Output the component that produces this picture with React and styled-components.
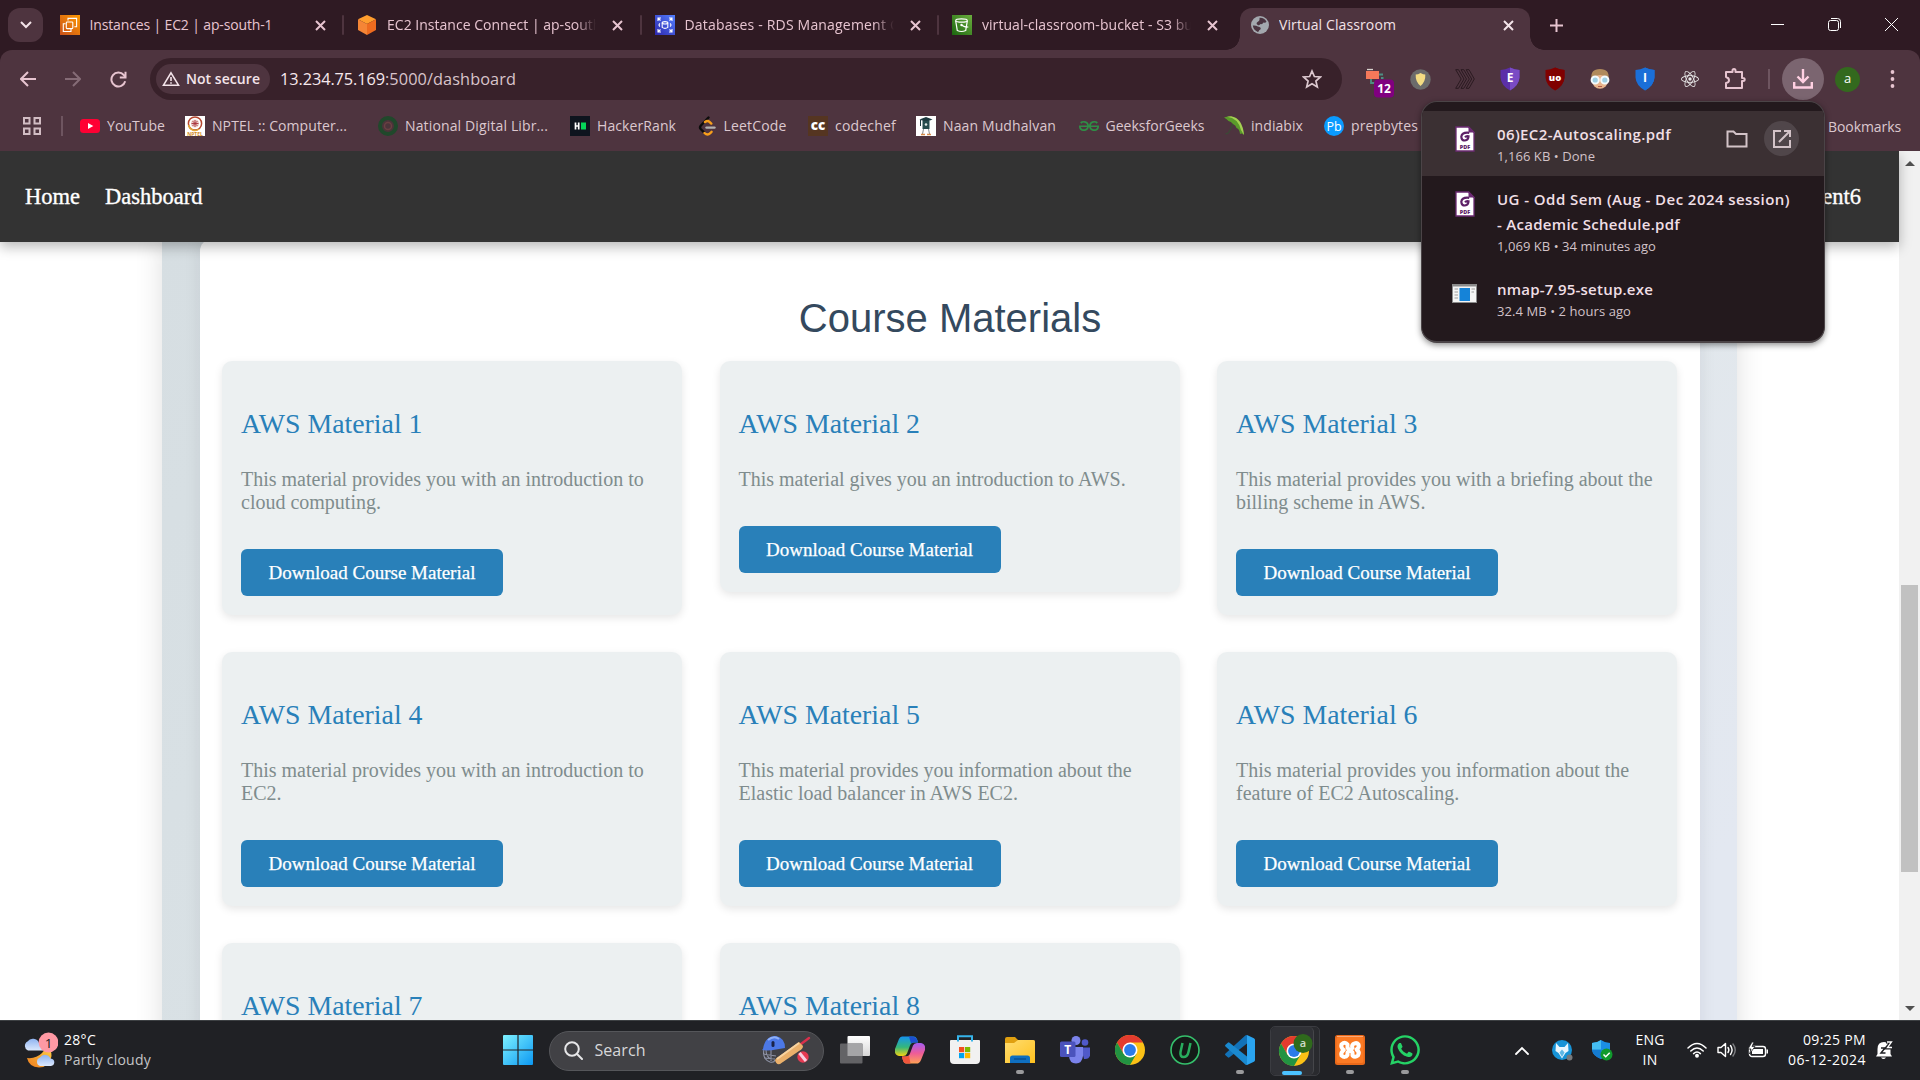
import React, { useLayoutEffect, useRef, useState } from "react";
import styled, { createGlobalStyle } from "styled-components";
import { SiGeeksforgeeks, SiReact } from "react-icons/si";
import { FaWhatsapp } from "react-icons/fa";

const UI = `"Open Sans", "Noto Sans", sans-serif`;
const SERIF = `"Liberation Serif", "Times New Roman", serif`;

const Global = createGlobalStyle`
  * { box-sizing: border-box; }
  html, body { margin: 0; padding: 0; overflow: hidden; background: #fff; }
  svg { display: block; flex: none; }
`;

/* ---------- text with a set measure ---------- */
const Line = styled.span`
  display: inline-block;
  white-space: pre;
  color: ${(p) => p.$color || "inherit"};
  font-size: ${(p) => p.$size}px;
  font-weight: ${(p) => p.$weight || 400};
  line-height: 1.3;
`;

function Fit({ w, size = 14, color, weight, children }) {
  const ref = useRef(null);
  const [ls, setLs] = useState(0);
  useLayoutEffect(() => {
    const el = ref.current;
    el.style.letterSpacing = "0px";
    const natural = el.getBoundingClientRect().width;
    const n = el.textContent.length;
    setLs((w - natural) / n);
    el.style.letterSpacing = (w - natural) / n + "px";
  }, [w]);
  return (
    <Line ref={ref} $size={size} $color={color} $weight={weight} style={{ letterSpacing: ls + "px" }}>
      {children}
    </Line>
  );
}

/* ---------- browser frame ---------- */
const Screen = styled.div`
  width: 1920px;
  height: 1080px;
  display: flex;
  flex-direction: column;
  position: relative;
  overflow: hidden;
  font-family: ${UI};
`;
const TabStrip = styled.div`
  height: 50px;
  flex: none;
  display: flex;
  background: #2f1a23;
  padding-left: 8px;
`;
const TabSearch = styled.div`
  width: 35px;
  height: 34px;
  margin: 8px 3.5px 0 0;
  border-radius: 12px;
  background: #4e343f;
  display: grid;
  place-items: center;
`;
const Tab = styled.div`
  width: 297.5px;
  height: 50px;
  padding-left: 13px;
  display: flex;
  align-items: center;
  color: #e7c4d0;
`;
const TabTitle = styled.div`
  width: 209px;
  margin-left: 10px;
  overflow: hidden;
  display: flex;
  ${(p) => p.$fade && "mask-image: linear-gradient(90deg, #000 calc(100% - 20px), transparent);"}
`;
const TabClose = styled.div`
  width: 43px;
  display: grid;
  place-items: center;
`;
const TabRule = styled.div`
  width: 2px;
  height: 20px;
  margin-left: auto;
  border-radius: 1px;
  background: ${(p) => (p.$off ? "transparent" : "#4e343f")};
`;
const ActiveTab = styled.div`
  width: 290px;
  height: 42px;
  margin: 8px 0 0 3.5px;
  padding: 0 0 8px 11px;
  display: flex;
  align-items: center;
  background: #4e343f;
  border-radius: 12px 12px 0 0;
  color: #f3e3e8;
  position: relative;
  &::before, &::after {
    content: "";
    position: absolute;
    bottom: 0;
    width: 14px;
    height: 14px;
  }
  &::before { left: -14px; background: radial-gradient(circle at 0 0, transparent 13.5px, #4e343f 14px); }
  &::after { right: -14px; background: radial-gradient(circle at 100% 0, transparent 13.5px, #4e343f 14px); }
`;
const NewTab = styled.div`
  width: 52px;
  height: 50px;
  display: grid;
  place-items: center;
`;
const WindowButtons = styled.div`
  margin-left: auto;
  display: grid;
  grid-template-columns: 57px 57px 57px;
  height: 49px;
  place-items: center;
`;

const ToolbarBack = styled.div`
  background: #2f1a23;
  flex: none;
`;
const Toolbar = styled.div`
  height: 51px;
  display: flex;
  align-items: center;
  background: #4e343f;
  padding: 7px 0 0 5.5px;
  border-radius: 12px 12px 0 0;
`;
const Cell = styled.div`
  width: ${(p) => p.$w || 45}px;
  height: 42px;
  flex: none;
  display: grid;
  place-items: center;
`;
const Omnibox = styled.div`
  width: 1192px;
  height: 42px;
  margin: 0 10.5px 0 9.5px;
  padding: 0 20px 0 6px;
  border-radius: 21px;
  background: #38212a;
  display: flex;
  align-items: center;
  color: #d9c4cb;
`;
const Chip = styled.div`
  width: 114px;
  height: 30px;
  margin-right: 10px;
  padding-left: 6px;
  gap: 6px;
  border-radius: 15px;
  background: #4e343f;
  color: #f4e4ea;
  display: flex;
  align-items: center;
`;
const Address = styled.div`
  display: flex;
  padding-top: 2px;
`;
const Push = styled.div`
  margin-left: auto;
  margin-right: ${(p) => p.$right || 0}px;
`;
const DownloadsButton = styled.div`
  width: 42px;
  height: 42px;
  border-radius: 50%;
  background: #7b6570;
  display: grid;
  place-items: center;
`;
const Avatar = styled.div`
  width: 25px;
  height: 25px;
  border-radius: 50%;
  background: #33691e;
  color: #fff;
  font-size: 13px;
  line-height: 22px;
  text-align: center;
`;
const Divider = styled.div`
  width: 2px;
  height: 20px;
  background: #6e5560;
`;
const BookmarkBar = styled.div`
  height: 50px;
  flex: none;
  display: flex;
  align-items: center;
  background: #4e343f;
  color: #dcc8cf;
  padding-left: 22px;
`;
const BookmarkGrid = styled.div`
  display: grid;
  grid-template-columns: 105px 193px 192px 126.500px 111.500px 108px 162.500px 145.500px 100px 110px;
  margin-left: 6px;
`;
const Bookmark = styled.div`
  display: flex;
  align-items: center;
  gap: 7px;
`;

/* ---------- web page ---------- */
const Viewport = styled.div`
  height: 869px;
  flex: none;
  display: flex;
  background: #fff;
  overflow: hidden;
`;
const Page = styled.div`
  width: 1899px;
  display: flex;
  flex-direction: column;
  font-family: ${SERIF};
`;
const Nav = styled.nav`
  height: 91px;
  flex: none;
  display: flex;
  align-items: center;
  padding: 0 38px 0 25px;
  gap: 25px;
  background: #333;
  color: #fff;
  font-size: 22.5px;
  -webkit-text-stroke: 0.35px #fff;
  z-index: 2;
  box-shadow: 0 5px 12px rgba(0, 0, 0, 0.28);
`;
const NavUser = styled.span`
  margin-left: auto;
`;
const Band = styled.main`
  width: 1575px;
  height: 1100px;
  margin: -3px 0 0 162px;
  padding: 0 37px 0 38px;
  background: linear-gradient(125deg, #d6dee2 0%, #dae2e6 35%, #e1e7ea 62%, #e3e8f1 85%);
  box-shadow: 0 0 26px rgba(0, 0, 0, 0.13);
`;
const Sheet = styled.section`
  height: 1100px;
  padding: 56px 22px 0;
  border-radius: 12px;
  background: #fff;
  box-shadow: 0 0 18px rgba(0, 0, 40, 0.08);
`;
const Heading = styled.h2`
  margin: 0 0 20px;
  font: 400 40px/46px "Liberation Sans", Arial, sans-serif;
  color: #34495e;
  text-align: center;
`;
const CardGrid = styled.div`
  display: grid;
  grid-template-columns: repeat(3, 460px);
  gap: 37px 37.5px;
  align-items: start;
`;
const Card = styled.article`
  padding: 47px 19px 19px;
  border-radius: 10px;
  background: #ecf0f1;
  box-shadow: 0 3px 8px rgba(0, 0, 0, 0.1);
`;
const CardTitle = styled.h3`
  margin: 0 0 28px;
  font-weight: 400;
  font-size: 27.8px;
  line-height: 32px;
  color: #2980b9;
`;
const CardText = styled.p`
  margin: 0 0 35px;
  font-size: 20px;
  line-height: 23px;
  color: #7f8c8d;
`;
const CardButton = styled.button`
  display: block;
  width: 262px;
  height: 47px;
  padding: 0;
  border: 0;
  border-radius: 6px;
  background: #2980b9;
  color: #fff;
  font: 400 19px/22px ${SERIF};
  -webkit-text-stroke: 0.25px #fff;
`;
const ScrollBar = styled.div`
  width: 21px;
  background: #f1f1f1;
  display: flex;
  flex-direction: column;
  align-items: center;
  justify-content: space-between;
  padding: 9px 0 8px;
`;
const Thumb = styled.div`
  width: 17px;
  height: 287px;
  margin-top: 284px;
  background: #c1c1c1;
`;

/* ---------- downloads popup ---------- */
const Popup = styled.div`
  position: absolute;
  left: 1421px;
  top: 101px;
  width: 404px;
  height: 242px;
  padding-top: 9px;
  border: 1px solid #4b4447;
  border-bottom-width: 2px;
  border-radius: 16px;
  background: #23191d;
  box-shadow: 0 2px 6px rgba(0, 0, 0, 0.45);
  z-index: 5;
  overflow: hidden;
`;
const DownloadRow = styled.div`
  height: ${(p) => p.$h}px;
  display: flex;
  align-items: flex-start;
  padding: 11px 25px 0 0;
  background: ${(p) => (p.$hover ? "#3b3033" : "transparent")};
`;
const FileIcon = styled.div`
  width: 75px;
  padding: ${(p) => p.$top}px 0 0 ${(p) => p.$left || 33}px;
`;
const FileText = styled.div`
  display: flex;
  flex-direction: column;
  align-items: flex-start;
  color: #f0dfe5;
  & > span { height: 25px; line-height: 25px; }
  & > span:last-child { height: 18px; line-height: 18px; color: #d2c2c8; }
`;
const RowActions = styled.div`
  margin-left: auto;
  margin-top: -1px;
  display: flex;
  align-items: center;
  gap: 16px;
  color: #d3c3c8;
`;
const OpenButton = styled.div`
  width: 35px;
  height: 35px;
  border-radius: 50%;
  background: #50464a;
  display: grid;
  place-items: center;
`;

/* ---------- taskbar ---------- */
const Taskbar = styled.footer`
  height: 60px;
  flex: none;
  display: flex;
  align-items: center;
  background: #202125;
  border-top: 1px solid #3d4043;
  color: #fff;
`;
const Weather = styled.div`
  width: 490px;
  padding: 0 0 2px 23px;
  display: flex;
  align-items: center;
  gap: 6px;
`;
const Stack = styled.div`
  display: flex;
  flex-direction: column;
  align-items: ${(p) => p.$align || "flex-start"};
  & > span { height: 20px; line-height: 20px; }
`;
const TaskCell = styled.div`
  width: 55px;
  height: 59px;
  display: flex;
  flex-direction: column;
  align-items: center;
  padding-top: 14px;
  gap: 5px;
`;
const ActiveCell = styled.div`
  width: 50px;
  height: 50px;
  margin: 0 2.5px;
  display: flex;
  border-radius: 5px;
  background: #292a2e;
  border: 1px solid #3b3c41;
`;
const ActiveFace = styled.div`
  width: 43px;
  padding: 7px 0 0;
  display: flex;
  flex-direction: column;
  align-items: center;
  gap: 5px;
  border-radius: 5px;
  background: #303136;
  border-right: 1px solid #45464a;
`;
const Dot = styled.div`
  width: ${(p) => (p.$active ? 20 : 8)}px;
  height: 4px;
  border-radius: 2px;
  background: ${(p) => (p.$active ? "#4cc2ff" : "#9a9a9c")};
`;
const SearchBox = styled.div`
  width: 275px;
  height: 40px;
  margin: 0 3.5px;
  padding: 0 12px 0 14px;
  border: 1px solid #55565a;
  border-radius: 20px;
  background: #414145;
  display: flex;
  align-items: center;
  gap: 12px;
  color: #d7d7d9;
`;
const Tray = styled.div`
  margin-left: auto;
  display: flex;
  align-items: center;
  padding: 0 18px 1px 0;
`;
const TrayCell = styled.div`
  width: ${(p) => p.$w}px;
  display: grid;
  place-items: ${(p) => p.$place || "center"};
`;

/* ---------- icons ---------- */
const Cross = ({ s = 11, w = 2 }) => (
  <svg width={s} height={s} viewBox="0 0 11 11" stroke="currentColor" strokeWidth={w} fill="none"><path d="M1 1l9 9M10 1l-9 9" /></svg>
);
const Ec2Icon = () => (
  <svg width="20" height="20" viewBox="0 0 20 20">
    <defs><linearGradient id="ec2" x1="0" y1="1" x2="1" y2="0"><stop stopColor="#c8511b" /><stop offset="1" stopColor="#ff9900" /></linearGradient></defs>
    <rect width="20" height="20" fill="url(#ec2)" />
    <g fill="none" stroke="#fff" strokeWidth="1.1"><path d="M5.5 8.7H3.3v7.8H11v-2.6" /><rect x="6.3" y="7" width="6.5" height="6.6" rx=".8" /><path d="M8 5.6V3.4h8.6v8.4h-2.2" /></g>
  </svg>
);
const CubeIcon = () => (
  <svg width="20" height="20" viewBox="0 0 20 20"><path d="M10 0l9 4.2L10 9 1 4.2z" fill="#ff9d2e" /><path d="M1 4.2L10 9v11l-9-5z" fill="#f58536" /><path d="M19 4.2L10 9v11l9-5z" fill="#ee6b1f" /></svg>
);
const RdsIcon = () => (
  <svg width="20" height="20" viewBox="0 0 20 20">
    <defs><linearGradient id="rds" x1="0" y1="1" x2="1" y2="0"><stop stopColor="#2e27ad" /><stop offset="1" stopColor="#527fff" /></linearGradient></defs>
    <rect width="20" height="20" fill="url(#rds)" />
    <g fill="none" stroke="#fff" strokeWidth="1.1"><path d="M3 6V3h3M3 3l2.5 2.5M14 3h3v3M17 3l-2.5 2.5M3 14v3h3M3 17l2.5-2.5M17 14v3h-3M17 17l-2.500-2.500M5 8.500q-2 1.500 0 3M15 8.500q2 1.500 0 3" /><ellipse cx="10" cy="7.800" rx="2.800" ry="1.200" /><path d="M7.200 7.800v4.600q2.800 2 5.600 0V7.800" /></g>
  </svg>
);
const S3Icon = () => (
  <svg width="20" height="20" viewBox="0 0 20 20">
    <defs><linearGradient id="s3" x1="0" y1="1" x2="1" y2="0"><stop stopColor="#1b660f" /><stop offset="1" stopColor="#6cae3e" /></linearGradient></defs>
    <rect width="20" height="20" fill="url(#s3)" />
    <g fill="none" stroke="#fff" strokeWidth="1.200"><ellipse cx="9.500" cy="5.500" rx="5.800" ry="1.700" /><path d="M3.700 5.800l1.600 9.700q4.200 2 8.400 0l1.600-9.700M9.300 10q5 3 7 1.800" /><circle cx="9.500" cy="10" r=".6" /></g>
  </svg>
);
const GlobeIcon = () => (
  <svg width="18" height="18" viewBox="0 0 18 18"><circle cx="9" cy="9" r="9" fill="#a3a8ae" /><path d="M8.500 1.800q5-.3 7 4-1 1.200-3 .7-1 2-3 1.600-1 1.600-2.700.8Q4.500 7.500 6.500 6 9 5 8.500 1.800zM1.800 9.500q3-.4 5 1 2 .2 3 1.500 0 2-1.600 2.200-.4 1.500-1.400 1.800Q2.500 14 1.800 9.500z" fill="#4a3440" /></svg>
);
const NptelIcon = () => (
  <svg width="20" height="20" viewBox="0 0 20 20"><rect width="20" height="20" fill="#fff" /><circle cx="10" cy="7.500" r="6.600" fill="none" stroke="#b5462f" strokeWidth="1.500" /><path d="M3.500 9A6.600 6.600 0 0 0 14 13" fill="none" stroke="#e0a43a" strokeWidth="1.500" /><circle cx="10" cy="7.500" r="4" fill="#edd0cb" /><path d="M10 4v7M6.500 7.500h7M7.500 5l5 5M12.500 5l-5 5" stroke="#a8323c" strokeWidth=".9" /><text x="10" y="19.500" textAnchor="middle" fontSize="5" fontWeight="700" fill="#d08a1e" fontFamily="Open Sans">NPTEL</text></svg>
);
const NdlIcon = () => (
  <svg width="20" height="20" viewBox="0 0 20 20"><circle cx="10" cy="10" r="8" fill="#4b343a" stroke="#20482b" strokeWidth="4" /><circle cx="10" cy="10" r="3.500" fill="none" stroke="#6a3f42" strokeWidth="1.500" /></svg>
);
const HackerIcon = () => (
  <svg width="20" height="20" viewBox="0 0 20 20"><rect width="20" height="20" fill="#0e141e" /><path d="M5.500 6.500v7M8.700 6.500v7M5.500 10h3.200" stroke="#fff" strokeWidth="1.700" /><rect x="11" y="6.500" width="5" height="7" fill="#05d559" /></svg>
);
const ChefIcon = () => (
  <svg width="20" height="20" viewBox="0 0 20 20"><rect width="20" height="20" fill="#553521" /><text x="10" y="14" textAnchor="middle" fontSize="13.500" fontWeight="800" fill="#fff" fontFamily="Open Sans">cc</text></svg>
);
const NaanIcon = () => (
  <svg width="20" height="20" viewBox="0 0 20 20"><rect width="20" height="20" fill="#fff" /><path d="M3.500 3.500L10 1l6.500 2.500L10 6z" fill="#1d3b40" /><path d="M6.500 5h7v8h-7z" fill="#254b4c" /><path d="M4.500 4v6" stroke="#1d3b40" /><circle cx="10" cy="8.500" r="1.300" fill="#dfe8e6" /><path d="M7.500 13l-1 5M12.500 13l1 5" stroke="#8a8d8f" /><path d="M5 18.500h4M11 18.500h4" stroke="#d88b4a" strokeWidth="1.500" /></svg>
);
const UmbrellaIcon = () => (
  <svg width="20" height="20" viewBox="0 0 20 20"><path d="M9.500 7L5 16q-1.500 2.500-3.500 1.500" fill="none" stroke="#3b4a36" strokeWidth="1.300" /><path d="M0 1.500Q15-4 20 19q-2-2.500-4-1-.3-5-3.500-6-.5-2.500-3.500-4-2-2.500-4.500-3Q3 3 0 1.500z" fill="#5a9a2a" /><path d="M3 .800Q14 2 17 14L20 19Q18.500 2 7 .2z" fill="#a4d152" /></svg>
);
const PbIcon = () => (
  <svg width="20" height="20" viewBox="0 0 20 20"><circle cx="10" cy="10" r="10" fill="#0a9bff" /><text x="10" y="14.500" textAnchor="middle" fontSize="12.500" fill="#fff" fontFamily="Open Sans">Pb</text></svg>
);
const YouTubeIcon = () => (
  <svg width="20" height="20" viewBox="0 0 20 20"><rect y="3" width="20" height="14" rx="3.500" fill="#ff0033" /><path d="M8 7l5.300 3L8 13z" fill="#fff" /></svg>
);
const GfgMark = () => <SiGeeksforgeeks size={20} color="#2f8d46" />;
const LeetMark = () => (
  <svg width="20" height="20" viewBox="0 0 20 20" fill="none" strokeWidth="2.400" strokeLinecap="round"><path d="M11.500 1.500L3.700 9.700q-1.400 1.700 0 3.300L7 16.300" stroke="#0c0c0c" /><path d="M7.500 17q3 3 5.800.2L14.600 15.800M8 6q2.500-2 4.500-.2L14.300 7.600" stroke="#f89f1b" /><path d="M9.500 11.600h8" stroke="#b3b1b0" /></svg>
);
const PdfIcon = () => (
  <svg width="20" height="26" viewBox="0 0 20 26"><path d="M1 1h12.500L19 6.500V25H1z" fill="#fff" stroke="#6b2a72" strokeWidth="1.300" /><path d="M13.500 0L20 6.500h-6.500z" fill="#6b2a72" /><path d="M14.200 6.800Q7 6 6.300 10.600q.2 3.900 3.600 3.900 3.600-.4 3.600-4.200-2.500-.4-3.400 1" fill="none" stroke="#5d2166" strokeWidth="2.200" /><text x="10" y="22.800" textAnchor="middle" fontSize="5.500" fontWeight="800" fill="#5d2166" fontFamily="Open Sans">PDF</text></svg>
);
const ExeIcon = () => (
  <svg width="25" height="19" viewBox="0 0 25 19"><rect width="25" height="19" fill="#8b8b8b" /><rect x="1" y="2.500" width="23" height="15.500" fill="#f5f5f5" /><rect x="7.500" y="4" width="10.500" height="13" fill="#1583d8" /><path d="M2.500 5h3.500M2.500 8h3.500M2.500 11h3.500M2.500 14h3.500M19.500 5h3.500M19.500 8h2.500" stroke="#9d9d9d" /></svg>
);
const ChromeParts = () => (
  <>
    <circle cx="15" cy="15" r="15" fill="#fbc116" />
    <path d="M15 7.500h13A15 15 0 0 0 2 7.500l6.500 11.200z" fill="#e33b2e" />
    <path d="M2 7.500A15 15 0 0 0 15 30l6.500-11.300-13 0z" fill="#229342" />
    <circle cx="15" cy="15" r="7.500" fill="#fff" />
    <circle cx="15" cy="15" r="5.900" fill="#2a7bea" />
  </>
);
const ChromeIcon = () => (
  <svg width="30" height="30" viewBox="0 0 30 30"><ChromeParts /></svg>
);
const ChromeBadged = () => (
  <svg width="42" height="32" viewBox="0 0 42 32">
    <g transform="translate(8 2)"><ChromeParts /></g>
    <circle cx="34" cy="5.500" r="0" />
    <circle cx="32" cy="9.500" r="9.500" fill="#2f6a1c" />
    <text x="32" y="13" textAnchor="middle" fontSize="11" fontWeight="600" fill="#cfdcc8" fontFamily="Open Sans">a</text>
  </svg>
);
const WeatherIcon = () => (
  <svg width="35" height="36" viewBox="0 0 35 36">
    <defs><linearGradient id="moon" x1="1" y1="0" x2="0" y2="1"><stop stopColor="#ffcf45" /><stop offset="1" stopColor="#ee7b1d" /></linearGradient><linearGradient id="cl" x1="0" y1="0" x2="0" y2="1"><stop stopColor="#8fb3f0" /><stop offset="1" stopColor="#dbe8fd" /></linearGradient></defs>
    <path d="M4 26q9 1 15-5 2-2 3-5 7 1 6.500 8Q27 35 16 35.500 6 35 4 26z" fill="url(#moon)" />
    <path d="M5 18.500a5 5 0 0 1-.5-9A6.500 6.500 0 0 1 16 11q5 1 4 7.500z" fill="url(#cl)" />
    <path d="M17 34a4.500 4.500 0 0 1 0-8.500 6 6 0 0 1 10.500 1q4 .5 3.800 4-.3 3-3.300 3.500z" fill="url(#cl)" />
    <circle cx="25.500" cy="10.500" r="9.900" fill="#ff99a4" /><text x="25.500" y="15.500" textAnchor="middle" fontSize="13.500" fill="#1b1b1b" fontFamily="Open Sans">1</text>
  </svg>
);
const StartIcon = () => (
  <svg width="30" height="30" viewBox="0 0 30 30"><defs><linearGradient id="st" x1="0" y1="0" x2="1" y2="1"><stop stopColor="#7df1ff" /><stop offset="1" stopColor="#0c98f2" /></linearGradient></defs><path d="M0 1q0-1 1-1h13.400v14.400H0zM15.600 0H29q1 0 1 1v13.400H15.600zM0 15.600h14.400V30H1q-1 0-1-1zM15.600 15.600H30V29q0 1-1 1H15.600z" fill="url(#st)" /></svg>
);
const CricketIcon = () => (
  <svg width="50" height="32" viewBox="0 0 50 32">
    <path d="M3 14Q1 24 9 27q4 1 5-2M5 15q0 7 5 9M2 19l13 2M3 23l11 1M10 15v11" fill="none" stroke="#8e93a6" strokeWidth="1.100" />
    <path d="M2 14Q4 1 15 1q9 2 9 12l-9 1.500Q8 16 1 15z" fill="#4c78e6" /><path d="M7 5q6-5 11-1" fill="none" stroke="#8fb0f7" strokeWidth="2" /><rect x="10.500" y="6" width="3" height="6" rx="1.500" fill="#1a2348" />
    <path d="M40 9l8-6" stroke="#d8304c" strokeWidth="2.400" strokeLinecap="round" /><path d="M38 7l4 4q0 3-4 5L19 29q-4 1-5-4 1-2 3-3z" fill="#eab06b" /><path d="M38 8L16 24" stroke="#f8d3a0" strokeWidth="2" />
    <circle cx="42" cy="22" r="5.700" fill="#e63a52" /><path d="M38.500 18l6.500 8" stroke="#f8cfe0" strokeWidth="3" />
  </svg>
);
const TaskViewIcon = () => (
  <svg width="30" height="30" viewBox="0 0 30 30"><defs><linearGradient id="tv" x1="0" y1="0" x2="0" y2="1"><stop stopColor="#fff" /><stop offset="1" stopColor="#d6d6d6" /></linearGradient></defs><rect x="7.500" y="1" width="22.500" height="20" rx="1" fill="url(#tv)" /><rect x="0" y="8.500" width="22.500" height="20" rx="1" fill="#636366" /><rect x="7.500" y="8.500" width="15" height="12.500" fill="#a5a5a7" /></svg>
);
const CopilotIcon = () => (
  <svg width="30" height="30" viewBox="0 0 30 30"><defs><linearGradient id="cp1" x1="0" y1="0" x2="0" y2="1"><stop stopColor="#1594f0" /><stop offset=".55" stopColor="#35b77a" /><stop offset="1" stopColor="#f3d311" /></linearGradient><linearGradient id="cp2" x1="0" y1="0" x2="0" y2="1"><stop stopColor="#a45cf3" /><stop offset=".5" stopColor="#ee5c98" /><stop offset="1" stopColor="#ffa155" /></linearGradient></defs>
    <path d="M7 1.500h12q3 .5 4 6h-4q-3 0-4 3l-3 8q-1 2.500-4 2.500H4q-5-1-4-7L4 4q1-2.500 3-2.500z" fill="url(#cp1)" /><path d="M17 1.500q5 .2 6 6h-4q-2 0-3 1l-2-7z" fill="#1c4fd0" /><path d="M23 28.500H11q-3-.5-4-7h4q3 0 4-3l3-8q1-2.500 4-2.500h4q5 1 4 7l-4 10q-1 3-3 3.500z" fill="url(#cp2)" /><path d="M11 28.500q-3-.5-4-7h4q2 0 3-1l1.500 8z" fill="#f0553c" /></svg>
);
const StoreIcon = () => (
  <svg width="30" height="30" viewBox="0 0 30 30"><path d="M8 7V1.300h14V7" fill="none" stroke="#36b4ea" strokeWidth="2" /><path d="M1 5h28q1 0 1 1v19q0 4-4 4H4q-4 0-4-4V6q0-1 1-1z" fill="#f1f1f1" /><path d="M8 4v2.500M22 4v2.500" stroke="#36b4ea" strokeWidth="2" /><rect x="9" y="12" width="5.200" height="5.200" fill="#f25022" /><rect x="15" y="12" width="5.200" height="5.200" fill="#7fba00" /><rect x="9" y="18" width="5.200" height="5.200" fill="#00a4ef" /><rect x="15" y="18" width="5.200" height="5.200" fill="#ffb900" /></svg>
);
const ExplorerIcon = () => (
  <svg width="30" height="30" viewBox="0 0 30 30"><defs><linearGradient id="fo" x1="0" y1="0" x2="1" y2="1"><stop stopColor="#ffdd71" /><stop offset="1" stopColor="#ffc11e" /></linearGradient></defs><path d="M0 4q0-2 2-2h8l3 3h15q2 0 2 2v4H0z" fill="#e0a010" /><path d="M0 8h9l4-3h15q2 0 2 2v21H0z" fill="url(#fo)" /><path d="M5 28v-5q0-2.500 2.500-2.500h15Q25 20.500 25 23v5z" fill="#0f6fc0" /><path d="M9 24h12" stroke="#0a4f92" strokeWidth="1.400" /></svg>
);
const TeamsIcon = () => (
  <svg width="30" height="30" viewBox="0 0 30 30"><circle cx="25" cy="7.500" r="3.300" fill="#5059c9" /><path d="M21 12.500h9v8q-1 4-6 3.500z" fill="#5059c9" /><circle cx="16" cy="5.500" r="4.500" fill="#7b83eb" /><path d="M9 12h14v9q-1 7.500-7 7.500-6.500 0-7-7.500z" fill="#7b83eb" /><rect x="0" y="6.500" width="15.500" height="15.500" rx="1.500" fill="#4b53bc" /><text x="7.700" y="18.500" textAnchor="middle" fontSize="12" fontWeight="700" fill="#fff" fontFamily="Open Sans">T</text></svg>
);
const UIcon = () => (
  <svg width="30" height="30" viewBox="0 0 30 30"><circle cx="15" cy="15" r="14" fill="#141a17" stroke="#35c06c" strokeWidth="1.600" /><path d="M12.500 8L10.500 17q-.7 5 3 5 4 0 5-5l2-9" fill="none" stroke="#28ad5d" strokeWidth="2.500" /></svg>
);
const CodeIcon = () => (
  <svg width="30" height="30" viewBox="0 0 30 30"><path d="M22 0v8.500L4.500 22.300q-.9.700-1.700 0L.5 20.300q-.9-.9 0-1.800L20.300.6q.8-.7 1.700-.6z" fill="#1272b8" /><path d="M22 30v-8.500L4.500 7.700q-.9-.7-1.700 0L.5 9.700q-.9.900 0 1.800l19.800 17.900q.8.700 1.700.6z" fill="#1a89cf" /><path d="M22 0l6.900 3.200q1.100.6 1.100 1.800v20q0 1.200-1.100 1.800L22 30z" fill="#2aa4f0" /></svg>
);
const XamppIcon = () => (
  <svg width="30" height="30" viewBox="0 0 30 30"><rect width="30" height="30" rx="2.500" fill="#e9691a" /><rect x="1.500" y="2" width="27" height="26" rx="2" fill="#fb7a24" /><path d="M2 1.500h26" stroke="#f9a877" strokeWidth="1" /><g fill="none" stroke="#fff" strokeWidth="4" strokeLinecap="round" strokeLinejoin="round"><path d="M6.500 9.500q3.500-3.500 6 0v3.500l2.500 2 2.500-2q-1-2.500.5-3.800 3.500-2.400 5.500.3 1 3-2 5 3.500 2.500 1.500 6-3 2.500-5.500 0v-3L15 15l-2.500 2.500V20q-2.500 3.500-6 .5-1-3 2.300-5.500Q5.500 12.500 6.500 9.500z" /></g></svg>
);
const ShieldLetter = ({ color, dark, letter, size = 12, weight = 700, rim }) => (
  <svg width="22" height="24" viewBox="0 0 22 24"><path d="M11 .5q4.500 2 9.500 2.500v7.500q-.5 8-9.500 13-9-5-9.500-13V3q5-.5 9.500-2.500z" fill={color} stroke={rim} /><path d="M11 .5q4.500 2 9.500 2.500v7.500q-.5 8-9.500 13z" fill={dark} /><text x="11" y={11 + size * 0.36} textAnchor="middle" fontSize={size} fontWeight={weight} fill="#fff" fontFamily="Open Sans">{letter}</text></svg>
);
const MonitorExt = () => (
  <svg width="38" height="38" viewBox="0 0 38 38"><path d="M10 11h13v8H10z" fill="#f4785a" /><path d="M11 9.500h6" stroke="#d8d3cf" strokeWidth="1.300" /><path d="M15 19v4h4M23 14.500h4M25 18h2.500" stroke="#4d8f83" strokeWidth="1.800" fill="none" /><rect x="18" y="19.500" width="20" height="18" rx="4" fill="#800080" /><text x="28" y="33" textAnchor="middle" fontSize="12" fontWeight="700" fill="#fff" fontFamily="Open Sans">12</text></svg>
);
const LemonExt = () => (
  <svg width="21" height="21" viewBox="0 0 21 21"><circle cx="10.500" cy="10.500" r="10.200" fill="#6b6b6b" /><path d="M10.500 4q3 1.500 4.800 1.500.5 7-4.800 11.500Q5.200 12.500 5.700 5.500 8 5.500 10.500 4z" fill="#f3dc83" /></svg>
);
const ChevronsExt = () => (
  <svg width="20" height="20" viewBox="0 0 20 20" fill="none" stroke="#2a1a20" strokeWidth="1"><path d="M.7.700h2.800L9 10l-5.500 9.300H.7L6.200 10zM6 .7h2.800L14.300 10l-5.500 9.300H6L11.500 10zM11.200.7H14L19.300 10 14 19.300h-2.800L16.700 10z" /></svg>
);
const FaceExt = () => (
  <svg width="20" height="22" viewBox="0 0 20 22"><circle cx="10" cy="13" r="7.800" fill="#e8b48c" /><path d="M1.500 11Q0 1 10 1t8.500 10Q14 7 10 7t-8.500 4z" fill="#b08a5c" /><g fill="#9fd0e4" stroke="#f4fafc" strokeWidth="2"><circle cx="5.200" cy="12" r="3.600" /><circle cx="14.800" cy="12" r="3.600" /></g><path d="M8 18.500h4" stroke="#b05a4a" /></svg>
);
const PuzzleIcon = () => (
  <svg width="22" height="22" viewBox="0 0 22 22" fill="none" stroke="#e7c4d0" strokeWidth="2" strokeLinejoin="round"><path d="M2 4h6.500V2.500q0-1.500 1.500-1.500T11.500 2.500V4H18v6h1q1.700 0 1.700 1.500T19 13h-1v7H2v-5q3-.3 3-2.700T2 9z" /></svg>
);
const ReloadIcon = () => (
  <svg width="17" height="17" viewBox="0 0 17 17" fill="none" stroke="#e7c4d0" strokeWidth="2"><path d="M15.200 10.300A7 7 0 1 1 13.800 4L15.500 6" /><path d="M15.500.8V6.500H9.800" /></svg>
);
const ArrowIcon = ({ color, flip }) => (
  <svg width="16" height="16" viewBox="0 0 16 16" fill="none" stroke={color} strokeWidth="2">{flip ? <path d="M0 8h14.500M8 1l7 7-7 7" /> : <path d="M16 8H1.500M8 1L1 8l7 7" />}</svg>
);
const TrayWolf = () => (
  <svg width="21" height="21" viewBox="0 0 21 21"><circle cx="10" cy="10" r="10" fill="#1793d6" /><path d="M4 3l3.500 4h5L16 3l.5 8-3 2-3.500 5.500L6.500 13l-3-2z" fill="#e9f6fd" /><path d="M10 9.500l2.500 3L10 17l-2.500-4.500z" fill="#5fb7e5" /><circle cx="17.500" cy="17.500" r="3" fill="#77797c" /></svg>
);
const Defender = () => (
  <svg width="21" height="21" viewBox="0 0 21 21"><path d="M9 0q4 3 9 3v7q-1 6-9 9-8-3-9-9V3q5 0 9-3z" fill="#1b8fe3" /><path d="M9 0v19q-8-3-9-9V9.500h9z" fill="#157bd0" /><path d="M9 0v9.500H0V3q5 0 9-3z" fill="#45bdf2" /><circle cx="14.500" cy="14.500" r="6" fill="#109a2c" /><path d="M11.500 14.500l2.200 2.200 4-4" fill="none" stroke="#fff" strokeWidth="1.500" /></svg>
);
const WifiIcon = () => (
  <svg width="20" height="16" viewBox="0 0 20 16" fill="none" stroke="#fff" strokeWidth="1.500" strokeLinecap="round"><path d="M1 6q9-9 18 0M3.800 9q6.200-6 12.400 0M6.600 11.600q3.400-3.200 6.800 0" /><circle cx="10" cy="13.800" r="1.200" fill="#fff" /></svg>
);
const SoundIcon = () => (
  <svg width="20" height="16" viewBox="0 0 20 16" fill="none" stroke="#fff" strokeWidth="1.400" strokeLinecap="round" strokeLinejoin="round"><path d="M1 5.500h3L8.500 1.500v13L4 10.500H1z" /><path d="M11 5.500q1.800 2.500 0 5M13.500 3.500q3.200 4.500 0 9" /><path d="M16 2q4.500 6 0 12" stroke="#7c7d80" /></svg>
);
const BatteryIcon = () => (
  <svg width="20" height="16" viewBox="0 0 20 16"><rect x="1.500" y="4.500" width="16" height="10" rx="2.500" fill="none" stroke="#fff" strokeWidth="1.400" /><rect x="4" y="7" width="11" height="5" fill="#fff" /><path d="M18.500 7.500h1.500v4h-1.500z" fill="#fff" /><path d="M4 0L0 7h3l-1.500 5L7 4.500H4L6 0z" fill="#fff" stroke="#202125" strokeWidth=".8" /></svg>
);
const BellIcon = () => (
  <svg width="18" height="20" viewBox="0 0 18 20"><path d="M2.500 9q0-7 6.500-7t6.500 7v5l1.500 2.500H1L2.500 14z" fill="#fff" /><path d="M6 17.500q2.500 3 5 0z" fill="#fff" /><path d="M6 8h4l-4 5h4.500" fill="none" stroke="#202125" strokeWidth="1.500" /><path d="M11 2h5.500L11.500 8H17" fill="none" stroke="#202125" strokeWidth="3.200" /><path d="M12 2h4.500L12.500 7.500H17" fill="none" stroke="#fff" strokeWidth="1.300" /></svg>
);

/* ---------- data ---------- */
const tabs = [
  { icon: <Ec2Icon />, text: "Instances | EC2 | ap-south-1", w: 183 },
  { icon: <CubeIcon />, text: "EC2 Instance Connect | ap-south-1", w: 227, fade: true },
  { icon: <RdsIcon />, text: "Databases - RDS Management Console", w: 259, fade: true },
  { icon: <S3Icon />, text: "virtual-classroom-bucket - S3 bucket", w: 238, fade: true },
];
const bookmarks = [
  { icon: <YouTubeIcon />, text: "YouTube", w: 58 },
  { icon: <NptelIcon />, text: "NPTEL :: Computer...", w: 135 },
  { icon: <NdlIcon />, text: "National Digital Libr...", w: 143 },
  { icon: <HackerIcon />, text: "HackerRank", w: 79 },
  { icon: <LeetMark />, text: "LeetCode", w: 63 },
  { icon: <ChefIcon />, text: "codechef", w: 61 },
  { icon: <NaanIcon />, text: "Naan Mudhalvan", w: 113 },
  { icon: <GfgMark />, text: "GeeksforGeeks", w: 99 },
  { icon: <UmbrellaIcon />, text: "indiabix", w: 52 },
  { icon: <PbIcon />, text: "prepbytes", w: 67 },
];
const materials = [
  "This material provides you with an introduction to cloud computing.",
  "This material gives you an introduction to AWS.",
  "This material provides you with a briefing about the billing scheme in AWS.",
  "This material provides you with an introduction to EC2.",
  "This material provides you information about the Elastic load balancer in AWS EC2.",
  "This material provides you information about the feature of EC2 Autoscaling.",
  "",
  "",
];
const pinned = [
  { icon: <TaskViewIcon /> },
  { icon: <CopilotIcon /> },
  { icon: <StoreIcon /> },
  { icon: <ExplorerIcon />, open: true },
  { icon: <TeamsIcon /> },
  { icon: <ChromeIcon /> },
  { icon: <UIcon /> },
  { icon: <CodeIcon />, open: true },
  { icon: <ChromeBadged />, active: true },
  { icon: <XamppIcon />, open: true },
  { icon: <FaWhatsapp size={34} color="#25d366" style={{ margin: "-2px 0" }} />, open: true },
];

export default function App() {
  return (
    <Screen>
      <Global />
      <TabStrip>
        <TabSearch>
          <svg width="12" height="8" viewBox="0 0 12 8" fill="none" stroke="#f3e3e8" strokeWidth="2"><path d="M1 1l5 5 5-5" /></svg>
        </TabSearch>
        {tabs.map((t, i) => (
          <Tab key={i}>
            {t.icon}
            <TabTitle $fade={t.fade}><Fit w={t.w}>{t.text}</Fit></TabTitle>
            <TabClose><Cross /></TabClose>
            <TabRule $off={i === 3} />
          </Tab>
        ))}
        <ActiveTab>
          <GlobeIcon />
          <TabTitle><Fit w={117}>Virtual Classroom</Fit></TabTitle>
          <TabClose><Cross /></TabClose>
        </ActiveTab>
        <NewTab>
          <svg width="13" height="13" viewBox="0 0 13 13" stroke="#e7c4d0" strokeWidth="2"><path d="M6.500 0v13M0 6.500h13" /></svg>
        </NewTab>
        <WindowButtons>
          <svg width="13" height="13" viewBox="0 0 13 13" stroke="#fff"><path d="M0 6.500h13" strokeWidth="1" /></svg>
          <svg width="13" height="13" viewBox="0 0 13 13" stroke="#fff" fill="none"><rect x=".5" y="2.500" width="10" height="10" rx="2" /><path d="M3 .500h6.500q3 0 3 3V10" /></svg>
          <svg width="13" height="13" viewBox="0 0 13 13" stroke="#fff"><path d="M0 0l13 13M13 0L0 13" /></svg>
        </WindowButtons>
      </TabStrip>

      <ToolbarBack>
        <Toolbar>
          <Cell><ArrowIcon color="#e7c4d0" /></Cell>
          <Cell><ArrowIcon color="#856b76" flip /></Cell>
          <Cell><ReloadIcon /></Cell>
          <Omnibox>
            <Chip>
              <svg width="18" height="16" viewBox="0 0 18 16" fill="none" stroke="currentColor" strokeWidth="1.600"><path d="M9 1.800L16.500 14.200h-15zM9 6v4M9 11.200v1.600" /></svg>
              <Fit w={74} size={14} weight={600}>Not secure</Fit>
            </Chip>
            <Address>
              <Fit w={105} size={16.300} color="#f6e8ed">13.234.75.169</Fit>
              <Fit w={131} size={16.300}>:5000/dashboard</Fit>
            </Address>
            <Push>
              <svg width="20" height="20" viewBox="0 0 20 20" fill="none" stroke="#dcc8cf" strokeWidth="1.700"><path d="M10 2l2.400 5.500 6 .5-4.500 4 1.400 5.900L10 14.700l-5.300 3.200L6.100 12 1.600 8l6-.5z" /></svg>
            </Push>
          </Omnibox>
          <Cell><MonitorExt /></Cell>
          <Cell><LemonExt /></Cell>
          <Cell><ChevronsExt /></Cell>
          <Cell><ShieldLetter color="#5b2fa8" dark="#7a4bc4" letter="E" size={12} /></Cell>
          <Cell><ShieldLetter color="#800000" dark="#800000" letter="uo" size={9.500} weight={800} /></Cell>
          <Cell><FaceExt /></Cell>
          <Cell><ShieldLetter color="#1a6fd8" dark="#1a6fd8" letter="I" size={12} /></Cell>
          <Cell><SiReact size={18} color="#e9e9e9" /></Cell>
          <Cell><PuzzleIcon /></Cell>
          <Cell $w={22.500}><Divider /></Cell>
          <Cell>
            <DownloadsButton>
              <svg width="20" height="20" viewBox="0 0 20 20" fill="none" stroke="#ffd0e2" strokeWidth="2.400"><path d="M10 0v13M4.500 7.500L10 13l5.500-5.500M1.200 13v5.500h17.600V13" /></svg>
            </DownloadsButton>
          </Cell>
          <Cell><Avatar>a</Avatar></Cell>
          <Cell>
            <svg width="5" height="18" viewBox="0 0 5 18" fill="#e7c4d0"><circle cx="2.500" cy="2" r="1.900" /><circle cx="2.500" cy="9" r="1.900" /><circle cx="2.500" cy="16" r="1.900" /></svg>
          </Cell>
        </Toolbar>
      </ToolbarBack>

      <BookmarkBar>
        <svg width="20" height="20" viewBox="0 0 20 20" fill="none" stroke="#d2bdc4" strokeWidth="2"><rect x="2" y="2" width="5.500" height="5.500" /><rect x="12.500" y="2" width="5.500" height="5.500" /><rect x="2" y="12.500" width="5.500" height="5.500" /><rect x="12.500" y="12.500" width="5.500" height="5.500" /></svg>
        <Cell $w={32}><Divider style={{ marginRight: -7 }} /></Cell>
        <BookmarkGrid>
          {bookmarks.map((b) => (
            <Bookmark key={b.text}>{b.icon}<Fit w={b.w} size={14}>{b.text}</Fit></Bookmark>
          ))}
        </BookmarkGrid>
        <Push $right={19}><Fit w={73} size={14}>Bookmarks</Fit></Push>
      </BookmarkBar>

      <Viewport>
        <Page>
          <Nav>
            <span>Home</span>
            <span>Dashboard</span>
            <NavUser>Student6</NavUser>
          </Nav>
          <Band>
            <Sheet>
              <Heading>Course Materials</Heading>
              <CardGrid>
                {materials.map((text, i) => (
                  <Card key={i}>
                    <CardTitle>AWS Material {i + 1}</CardTitle>
                    <CardText>{text}</CardText>
                    {text && <CardButton>Download Course Material</CardButton>}
                  </Card>
                ))}
              </CardGrid>
            </Sheet>
          </Band>
        </Page>
        <ScrollBar>
          <svg width="10" height="6" viewBox="0 0 10 6" fill="#505050"><path d="M0 6l5-5 5 5z" /></svg>
          <Thumb />
          <svg width="10" height="6" viewBox="0 0 10 6" fill="#505050"><path d="M0 0l5 5 5-5z" /></svg>
        </ScrollBar>
      </Viewport>

      <Popup>
        <DownloadRow $h={65} $hover>
          <FileIcon $top={4}><PdfIcon /></FileIcon>
          <FileText>
            <Fit w={174} size={15} weight={600}>06)EC2-Autoscaling.pdf</Fit>
            <Fit w={98} size={13}>1,166 KB • Done</Fit>
          </FileText>
          <RowActions>
            <svg width="22" height="18" viewBox="0 0 22 18" fill="none" stroke="currentColor" strokeWidth="2"><path d="M1.500 1.500h6l2.500 2.500h10.500v12.500h-19z" /></svg>
            <OpenButton>
              <svg width="18" height="18" viewBox="0 0 18 18" fill="none" stroke="currentColor" strokeWidth="2"><path d="M8 1H1v16h16v-7M11 1h6v6M17 1L6 12" /></svg>
            </OpenButton>
          </RowActions>
        </DownloadRow>
        <DownloadRow $h={90}>
          <FileIcon $top={4}><PdfIcon /></FileIcon>
          <FileText>
            <Fit w={293} size={15} weight={600}>UG - Odd Sem (Aug - Dec 2024 session)</Fit>
            <Fit w={183} size={15} weight={600}>- Academic Schedule.pdf</Fit>
            <Fit w={159} size={13}>1,069 KB • 34 minutes ago</Fit>
          </FileText>
        </DownloadRow>
        <DownloadRow $h={65}>
          <FileIcon $top={7} $left={30}><ExeIcon /></FileIcon>
          <FileText>
            <Fit w={156} size={15} weight={600}>nmap-7.95-setup.exe</Fit>
            <Fit w={134} size={13}>32.4 MB • 2 hours ago</Fit>
          </FileText>
        </DownloadRow>
      </Popup>

      <Taskbar>
        <Weather>
          <WeatherIcon />
          <Stack>
            <Fit w={32} size={14}>28°C</Fit>
            <Fit w={87} size={14} color="#c4c4c6">Partly cloudy</Fit>
          </Stack>
        </Weather>
        <TaskCell><StartIcon /></TaskCell>
        <SearchBox>
          <svg width="19" height="19" viewBox="0 0 19 19" fill="none" stroke="#e6e6e8" strokeWidth="2" strokeLinecap="round"><circle cx="8" cy="8" r="6.800" /><path d="M13 13l5 5" /></svg>
          <Fit w={51} size={16}>Search</Fit>
          <Push><CricketIcon /></Push>
        </SearchBox>
        {pinned.map((p, i) =>
          p.active ? (
            <ActiveCell key={i}><ActiveFace>{p.icon}<Dot $active /></ActiveFace></ActiveCell>
          ) : (
            <TaskCell key={i}>{p.icon}{p.open && <Dot />}</TaskCell>
          )
        )}
        <Tray>
          <TrayCell $w={40}>
            <svg width="14" height="9" viewBox="0 0 14 9" fill="none" stroke="#fff" strokeWidth="1.800" strokeLinecap="round"><path d="M1 8l6-6 6 6" /></svg>
          </TrayCell>
          <TrayCell $w={40}><TrayWolf /></TrayCell>
          <TrayCell $w={40}><Defender /></TrayCell>
          <TrayCell $w={56}>
            <Stack $align="center"><Fit w={29} size={14}>ENG</Fit><Fit w={15} size={14}>IN</Fit></Stack>
          </TrayCell>
          <TrayCell $w={37}><WifiIcon /></TrayCell>
          <TrayCell $w={24}><SoundIcon /></TrayCell>
          <TrayCell $w={37}><BatteryIcon /></TrayCell>
          <TrayCell $w={90} $place="center end">
            <Stack $align="flex-end"><Fit w={63} size={14}>09:25 PM</Fit><Fit w={78} size={14}>06-12-2024</Fit></Stack>
          </TrayCell>
          <TrayCell $w={36}><BellIcon /></TrayCell>
        </Tray>
      </Taskbar>
    </Screen>
  );
}
